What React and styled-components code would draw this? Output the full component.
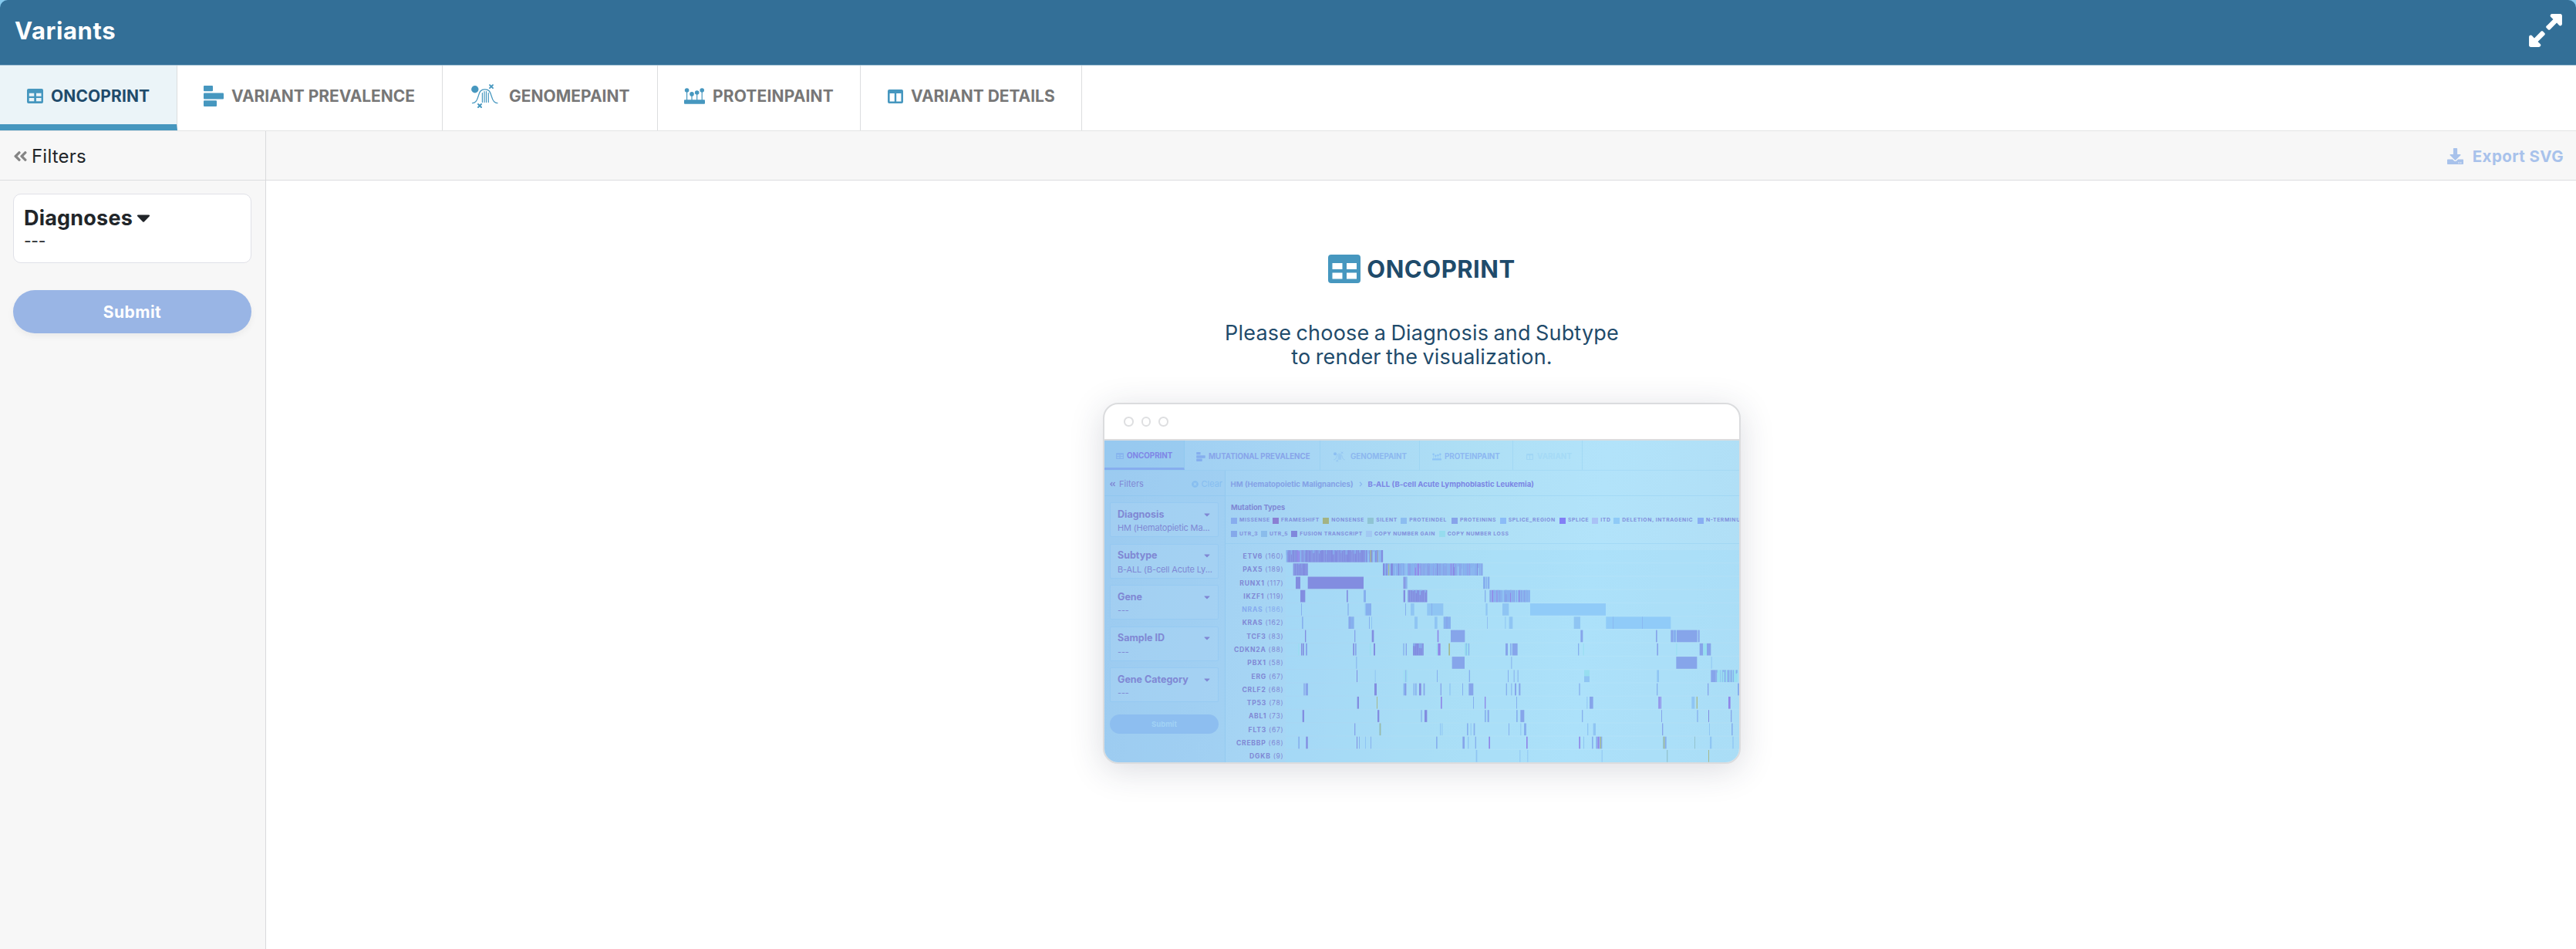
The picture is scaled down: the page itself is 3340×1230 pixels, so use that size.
import React from "react";
import styled, { createGlobalStyle } from "styled-components";
import { FaDownload, FaExpandAlt, FaAngleDoubleLeft, FaCaretDown, FaChevronRight, FaTimesCircle } from "react-icons/fa";

const GlobalStyle = createGlobalStyle`
  * { box-sizing: border-box; }
  body { margin: 0; background: #86c9ee; font-family: Inter, "Liberation Sans", sans-serif; }
  svg { display: block; flex: none; }
`;

/* ---------- icons ---------- */

const TableIcon = ({ width, height }) => (
  <svg width={width} height={height} viewBox="0 0 42 37" preserveAspectRatio="none">
    <path
      fill="currentColor"
      fillRule="evenodd"
      d="M4 0h34a4 4 0 0 1 4 4v29a4 4 0 0 1-4 4H4a4 4 0 0 1-4-4V4a4 4 0 0 1 4-4zM5.500 11v8h13v-8zM24 11v8h13v-8zM5.500 23.500v8h13v-8zM24 23.500v8h13v-8z"
    />
  </svg>
);

const BarsIcon = ({ width, height }) => (
  <svg width={width} height={height} viewBox="0 0 26 27">
    <g fill="currentColor">
      <rect width="12" height="7.300" rx="1" />
      <rect y="9.500" width="26" height="8" rx="1" />
      <rect y="19.300" width="17" height="7.700" rx="1" />
    </g>
  </svg>
);

const GenomeIcon = ({ width, height }) => (
  <svg width={width} height={height} viewBox="0 0 35 31">
    <circle cx="4.800" cy="6.800" r="4.700" fill="currentColor" />
    <g fill="none" stroke="currentColor" strokeWidth="1.300" strokeLinecap="round">
      <path d="M1.500 24.600c4 0 6-3 7.400-8.300C10.700 9.500 12.500 6.800 17.700 6.800s7 2.700 8.800 9.500c1.400 5.300 3.400 8.300 7.500 8.300" />
      <path d="M14.400 11.500v12M17 9.500v14M19.500 9.500v14M22.300 11.500v12" strokeWidth="1.200" />
      <path d="M24 1.200l4 4M28 1.200l-4 4M9 26l4 4M13 26l-4 4" strokeWidth="1.900" />
    </g>
  </svg>
);

const ProteinIcon = ({ width, height }) => (
  <svg width={width} height={height} viewBox="0 0 27 21">
    <g fill="currentColor">
      <rect y="15.300" width="27" height="5.400" rx="1" />
      <circle cx="3.600" cy="3" r="2.800" />
      <circle cx="10" cy="7.900" r="2.800" />
      <circle cx="16.700" cy="6" r="2.800" />
      <circle cx="23.200" cy="3" r="2.800" />
    </g>
    <path d="M3.600 4v12M10 8v8M16.700 6v10M23.200 4v12" stroke="currentColor" strokeWidth="1.200" />
  </svg>
);

const ColumnsIcon = ({ width, height }) => (
  <svg width={width} height={height} viewBox="0 0 20 18" preserveAspectRatio="none">
    <path
      fill="currentColor"
      fillRule="evenodd"
      d="M2 0h16a2 2 0 0 1 2 2v14a2 2 0 0 1-2 2H2a2 2 0 0 1-2-2V2a2 2 0 0 1 2-2zM2.600 5v10.500h6.200V5zM11.200 5v10.500h6.200V5z"
    />
  </svg>
);

/* ---------- page shell ---------- */

const Page = styled.div`
  width: 3340px;
  height: 1230px;
  display: flex;
  flex-direction: column;
  overflow: hidden;
`;

const Header = styled.header`
  height: 85px;
  flex: none;
  display: flex;
  align-items: center;
  justify-content: space-between;
  padding: 0 15px 5px 19px;
  border-radius: 10px 10px 0 0;
  border-bottom: 1px solid #9fbfd3;
  background: #336f97;
  color: #fff;
`;

const Title = styled.h1`
  margin: 0;
  font-size: 31px;
  font-weight: 700;
  letter-spacing: ${(p) => p.$track}px;
`;

const TabBar = styled.nav`
  height: 85px;
  flex: none;
  display: flex;
  background: #fff;
  border-bottom: 1px solid #e3e4e5;
`;

const Tab = styled.div`
  width: ${(p) => p.$width}px;
  display: flex;
  align-items: center;
  gap: ${(p) => p.$gap}px;
  padding: ${(p) => (p.$active ? 3 : 0)}px 0 ${(p) => (p.$active ? 0 : 5)}px ${(p) => p.$left}px;
  border-right: 1px solid #dcdddf;
  border-bottom: ${(p) => (p.$active ? "8px solid #4697bf" : "0")};
  background: ${(p) => (p.$active ? "#ebf4f8" : "#fff")};
  color: #4697bf;
`;

const TabText = styled.span`
  color: ${(p) => (p.$active ? "#1f4b6b" : "#777")};
  font-size: 21px;
  line-height: 26px;
  font-weight: 700;
  letter-spacing: ${(p) => p.$track}px;
  white-space: nowrap;
  padding-top: 1px;
`;

const Main = styled.div`
  flex: 1;
  display: flex;
  min-height: 0;
`;

const Sidebar = styled.aside`
  width: 345px;
  flex: none;
  background: #f7f7f7;
  border-right: 1px solid #d9dadc;
`;

const FilterHead = styled.div`
  height: 64px;
  display: flex;
  align-items: center;
  gap: 4px;
  padding: 1px 0 0 16px;
  border-bottom: 1px solid #dcdddf;
  color: #858585;
`;

const FilterText = styled.span`
  color: #212529;
  font-size: 24px;
  letter-spacing: ${(p) => p.$track}px;
`;

const SidebarBody = styled.div`
  padding: 17px 18px 0 17px;
  display: flex;
  flex-direction: column;
  gap: 35px;
`;

const Picker = styled.div`
  height: 90px;
  padding: 13px 0 0 13px;
  border: 1px solid #e0e1e8;
  border-radius: 10px;
  background: #fff;
  color: #212529;
`;

const PickerLabel = styled.div`
  display: flex;
  align-items: center;
  height: 34px;
  font-size: 27px;
  font-weight: 700;
  letter-spacing: ${(p) => p.$track}px;
`;

const PickerValue = styled.div`
  padding-top: 2px;
  font-size: 21px;
  line-height: 24px;
  letter-spacing: -0.300px;
`;

const SubmitButton = styled.div`
  height: 56px;
  border-radius: 28px;
  display: flex;
  align-items: center;
  justify-content: center;
  background: #99b5e5;
  color: #fff;
  font-size: 21px;
  font-weight: 700;
  letter-spacing: ${(p) => p.$track}px;
  box-shadow: 0 4px 8px rgba(0, 0, 0, 0.05);
`;

const Content = styled.main`
  flex: 1;
  display: flex;
  flex-direction: column;
  background: #fff;
`;

const Toolbar = styled.div`
  height: 64px;
  flex: none;
  display: flex;
  align-items: center;
  justify-content: flex-end;
  gap: 12px;
  padding: 1px 16px 0 0;
  border-bottom: 1px solid #dcdddf;
  background: #f7f7f7;
  color: #a8c2eb;
  font-size: 20.500px;
  font-weight: 700;
  letter-spacing: ${(p) => p.$track}px;
`;

const Intro = styled.section`
  display: flex;
  flex-direction: column;
  align-items: center;
  padding: 94px 0 0 2px;
`;

const IntroTitle = styled.h2`
  margin: 0;
  height: 41px;
  display: flex;
  align-items: center;
  gap: 8px;
  color: #4697bf;
`;

const IntroName = styled.span`
  color: #1f4b6b;
  font-size: 31px;
  font-weight: 700;
  letter-spacing: ${(p) => p.$track}px;
`;

const IntroText = styled.p`
  margin: 47px 0 44px;
  text-align: center;
  color: #1f4b6b;
  font-size: 27px;
  line-height: 31px;
  letter-spacing: ${(p) => p.$track}px;
  word-spacing: -1.500px;
`;

/* ---------- preview window ---------- */

const Window = styled.div`
  width: 827px;
  height: 468px;
  border: 2px solid #dbdcde;
  border-radius: 20px;
  overflow: hidden;
  background: #fff;
  box-shadow: 0 8px 44px rgba(40, 50, 80, 0.17);
`;

const WindowBar = styled.div`
  height: 47px;
  display: flex;
  align-items: center;
  gap: 10px;
  padding-left: 25px;
  border-bottom: 2px solid #dbdcde;
`;

const Dot = styled.i`
  width: 12.5px;
  height: 12.5px;
  border: 2px solid #dedfe1;
  border-radius: 50%;
`;

const Preview = styled.div`
  width: 823px;
  height: 417px;
  display: flex;
  flex-direction: column;
  overflow: hidden;
  background: linear-gradient(97deg, #9dccf1 0%, #a6d5f4 28%, #aedff5 55%, #b2e3fa 75%, #b0def5 100%);
  color: #8088d4;
  line-height: 1;
  white-space: nowrap;
`;

const MiniTabs = styled.div`
  height: 39px;
  flex: none;
  display: flex;
  border-bottom: 1px solid rgba(120, 190, 235, 0.2);
`;

const MiniTab = styled.div`
  width: ${(p) => p.$width}px;
  display: flex;
  align-items: center;
  gap: ${(p) => p.$gap}px;
  padding-left: ${(p) => p.$left}px;
  padding-top: ${(p) => (p.$active ? 5 : 3)}px;
  border-right: 1px solid rgba(120, 190, 235, 0.25);
  border-bottom: ${(p) => (p.$active ? "3px solid #86adee" : "0")};
  background: ${(p) => (p.$active ? "rgba(140,195,238,.35)" : "none")};
  color: ${(p) => p.$iconColor};
`;

const MiniTabText = styled.span`
  color: ${(p) => p.$color};
  font-size: 9.800px;
  font-weight: 700;
  letter-spacing: ${(p) => p.$track}px;
`;

const MiniMain = styled.div`
  flex: 1;
  display: flex;
`;

const MiniSide = styled.div`
  width: 157px;
  flex: none;
  border-right: 1px solid rgba(120, 190, 235, 0.3);
  background: rgba(150, 200, 240, 0.25);
`;

const MiniSideHead = styled.div`
  height: 33px;
  display: flex;
  align-items: center;
  gap: 4px;
  padding: 2px 3px 0 6px;
  border-bottom: 1px solid rgba(120, 190, 235, 0.3);
  font-size: 11px;
`;

const MiniClear = styled.span`
  display: flex;
  align-items: center;
  gap: 3px;
  margin-left: auto;
  color: #86bdf0;
`;

const MiniCards = styled.div`
  display: flex;
  flex-direction: column;
  gap: 8.500px;
  padding: 8px 8px 0 7px;
`;

const MiniCard = styled.div`
  height: 45px;
  display: flex;
  flex-direction: column;
  gap: 6px;
  padding: 8.500px 8px 0 9px;
  border: 1px solid rgba(125, 190, 240, 0.35);
  border-radius: 2px;
  background: rgba(175, 215, 245, 0.3);
`;

const MiniCardHead = styled.div`
  display: flex;
  justify-content: space-between;
  align-items: center;
  font-size: 12.500px;
  font-weight: 700;
`;

const MiniCardValue = styled.div`
  font-size: 11px;
  letter-spacing: -0.150px;
`;

const MiniSubmit = styled.div`
  height: 25.500px;
  margin-top: 7px;
  border-radius: 13px;
  display: flex;
  align-items: center;
  justify-content: center;
  background: #8dbef0;
  color: #a1d2f5;
  font-size: 9.500px;
  font-weight: 700;
`;

const MiniBody = styled.div`
  width: 666px;
  flex: none;
  overflow: hidden;
`;

const Crumbs = styled.div`
  height: 33px;
  display: flex;
  align-items: center;
  gap: 6px;
  padding: 3px 0 0 6.500px;
  border-bottom: 1px solid rgba(120, 190, 235, 0.25);
  color: #8ab6ee;
  font-size: 9.600px;
`;

const Crumb = styled.b`
  color: ${(p) => p.$color};
  letter-spacing: ${(p) => p.$track}px;
`;

const LegendPanel = styled.div`
  height: 62px;
  padding: 10px 0 0 7px;
  border-bottom: 1px solid rgba(120, 190, 235, 0.25);
`;

const LegendTitle = styled.div`
  font-size: 9.300px;
  font-weight: 700;
  letter-spacing: -0.050px;
  height: 13px;
`;

const LegendRow = styled.div`
  height: 17.300px;
  display: flex;
  align-items: center;
`;

const LegendItem = styled.div`
  width: ${(p) => p.$width}px;
  flex: none;
  display: flex;
  align-items: center;
  gap: 3px;
  color: #8290dc;
  font-size: 6.800px;
  font-weight: 700;
  letter-spacing: 0.600px;
`;

const Swatch = styled.i`
  width: 8px;
  height: 8px;
  flex: none;
  background: ${(p) => p.$color};
`;

const ChartArea = styled.div`
  display: flex;
  padding-top: 8.300px;
`;

const Genes = styled.div`
  width: 78px;
  flex: none;
  padding-right: 2.500px;
`;

const Gene = styled.div`
  height: 17.270px;
  display: flex;
  justify-content: flex-end;
  align-items: center;
  gap: 3px;
  padding-bottom: 1px;
  color: ${(p) => (p.$dim ? "#85aaee" : "#8088d4")};
  font-size: 8.600px;
  letter-spacing: 0.750px;
`;

/* ---------- data ---------- */

const TABS = [
  { label: "ONCOPRINT", width: 230, left: 35, gap: 10, Icon: TableIcon, iw: 21, ih: 19, track: 0.1, active: true },
  { label: "VARIANT PREVALENCE", width: 344, left: 34, gap: 10, Icon: BarsIcon, iw: 26, ih: 27, track: -0.05 },
  { label: "GENOMEPAINT", width: 279, left: 37, gap: 14, Icon: GenomeIcon, iw: 35, ih: 31, track: 0 },
  { label: "PROTEINPAINT", width: 263, left: 34, gap: 10, Icon: ProteinIcon, iw: 27, ih: 21, track: 0.15 },
  { label: "VARIANT DETAILS", width: 287, left: 35, gap: 10, Icon: ColumnsIcon, iw: 20, ih: 18, track: -0.05 },
];

const MINI_TABS = [
  { label: "ONCOPRINT", width: 104, left: 15, gap: 4, Icon: TableIcon, iw: 10, ih: 8, color: "#7f86e6", icon: "#87b5ee", track: 0, active: true },
  { label: "MUTATIONAL PREVALENCE", width: 176, left: 15, gap: 4, Icon: BarsIcon, iw: 12, ih: 12, color: "#88a5ea", icon: "#85aeee", track: -0.05 },
  { label: "GENOMEPAINT", width: 129, left: 17, gap: 7, Icon: GenomeIcon, iw: 15, ih: 14, color: "#8db8ef", icon: "#8cbff2", track: 0 },
  { label: "PROTEINPAINT", width: 121, left: 16, gap: 4, Icon: ProteinIcon, iw: 12, ih: 10, color: "#8db8f1", icon: "#8ec4f6", track: -0.05 },
  { label: "VARIANT", width: 90, left: 17, gap: 5, Icon: ColumnsIcon, iw: 9, ih: 8, color: "#a5daf6", icon: "#a0d6f5", track: 0.1 },
];

const CARDS = [
  ["Diagnosis", "HM (Hematopietic Ma..."],
  ["Subtype", "B-ALL (B-cell Acute Ly..."],
  ["Gene", "---"],
  ["Sample ID", "---"],
  ["Gene Category", "---"],
];

const LEGEND = [
  [
    ["MISSENSE", "#87adee", 54],
    ["FRAMESHIFT", "#8a7fd3", 65.3],
    ["NONSENSE", "#a3b383", 58],
    ["SILENT", "#8fc4d3", 43],
    ["PROTEINDEL", "#8cbdf0", 65.7],
    ["PROTEININS", "#87a3ea", 62.7],
    ["SPLICE_REGION", "#8bbcf7", 77.3],
    ["SPLICE", "#827ff5", 42.3],
    ["ITD", "#a9c2f6", 28],
    ["DELETION, INTRAGENIC", "#8fcaf7", 108.7],
    ["N-TERMINU", "#88aef3", 55],
  ],
  [
    ["UTR_3", "#85a9ea", 39],
    ["UTR_5", "#8abceb", 39.3],
    ["FUSION TRANSCRIPT", "#8088dc", 96.7],
    ["COPY NUMBER GAIN", "#a2c9f3", 94.7],
    ["COPY NUMBER LOSS", "#96dcee", 100],
  ],
];

const GENES = [
  ["ETV6", 160], ["PAX5", 189], ["RUNX1", 117], ["IKZF1", 119], ["NRAS", 186], ["KRAS", 162], ["TCF3", 83], ["CDKN2A", 88],
  ["PBX1", 58], ["ERG", 67], ["CRLF2", 68], ["TP53", 78], ["ABL1", 73], ["FLT3", 67], ["CREBBP", 68], ["DGKB", 9],
];

const INK = {
  P: "#828de0", // fusion
  Q: "#86a5ea", // fusion, lighter side of the chart
  B: "#86b0ee", // missense
  L: "#8fc5f3", // proteindel
  S: "#90cbf8", // deletion
  T: "#97def0", // copy loss
  V: "#8f86e8", // frameshift
  Y: "#a6b88c", // nonsense
  G: "#93c3cf", // silent
};

/* Stripe palettes used where a block is a run of many one-sample columns. */
const MIX = {
  1: "PPPVPBPPP",
  2: "PBLPYBPBLB",
  3: "QBPBLQQBVQB",
  4: "BQBVBQBLBQ",
  5: "TQTBTTQBT",
  6: "PPPPPPP",
};

/* Each row: start, width, ink (a letter) or stripe palette (a digit). */
const CELLS = [
  "773 84 1,857 223 6,1080 69 2",
  "800 57 6,1149 70 2,1219 318 3",
  "810 18 P,857 217 P,1229 6 P,1236 5 Q,1241 3 B,1539 9 B,1550 5 B,1557 7 B",
  "828 19 P,1008 5 P,1074 9 B,1229 7 P,1246 75 6,1545 4 B,1564 157 4",
  "831 3 B,1012 4 B,1079 4 L,1083 21 B,1236 3 B,1257 14 L,1321 63 L,1338 3 B,1549 7 L,1614 25 L,1722 294 S",
  "834 5 B,1015 22 B,1018 5 Q,1095 3 B,1104 3 L,1272 12 L,1350 11 L,1385 28 B,1396 4 Q,1555 2 B,1624 3 L,1640 14 L,1892 25 L,2017 252 S,2043 2 B,2158 2 B",
  "846 4 P,1038 4 Q,1106 8 P,1361 5 V,1413 55 Q,1918 9 Q,2211 5 Q,2269 10 Q,2280 10 B,2292 80 Q,2375 6 Q",
  "820 3 T,831 4 P,837 5 P,849 6 Q,1033 5 P,1041 5 Q,1098 4 T,1113 6 P,1228 4 B,1238 4 Q,1266 41 6,1357 4 T,1363 10 V,1404 2 T,1405 5 Y,1467 18 5,1626 9 Q,1644 5 B,1652 21 Q,1908 4 B,1928 3 T,2215 5 Q,2290 3 T,2381 14 Q,2395 14 T,2409 16 Q",
  "1045 3 B,1418 49 Q,1648 3 B,2290 81 Q,2426 3 L",
  "1047 3 P,1118 3 L,1231 3 T,1237 3 B,1241 3 T,1359 3 B,1484 4 B,1635 3 B,1658 3 B,1673 3 B,1932 21 T,2215 8 L,2425 18 Q,2443 86 5",
  "841 4 Q,848 10 Q,1116 9 P,1229 10 B,1237 3 P,1268 4 B,1275 5 B,1290 8 P,1307 5 Q,1373 4 Q,1408 4 L,1458 3 B,1483 18 Q,1628 4 B,1648 3 B,1662 6 Q,1678 6 Q,1912 4 B,2214 4 B,2412 4 Q,2529 6 B",
  "1049 7 P,1125 3 Y,1374 5 V,1500 3 B,1545 4 V,1668 3 B,1942 3 L,1953 14 Q,2221 5 V,2228 4 V,2350 12 L,2369 4 Y,2493 8 V",
  "836 7 P,1128 7 P,1297 4 B,1311 10 P,1545 5 B,1556 6 Q,1668 5 B,1684 15 Q,1923 4 B,2232 3 Q,2371 4 B,2415 3 P,2502 4 Q",
  "1038 4 Q,1135 7 G,1138 2 Y,1371 3 L,1378 3 L,1476 5 B,1490 3 L,1502 5 B,1638 3 B,1684 3 L,1698 9 B,1944 4 L,1967 10 L,2235 4 Q,2418 3 L,2505 5 B",
  "820 5 B,850 7 P,1047 3 P,1056 3 B,1080 3 L,1101 3 B,1356 5 B,1459 8 Q,1479 4 L,1508 4 B,1561 5 V,1707 5 V,1912 5 V,1929 3 L,1962 5 B,1978 5 B,1984 7 V,1991 3 B,1994 4 Y,1998 4 B,2238 5 G,2242 4 Y,2246 6 B,2361 3 G,2421 7 L,2509 4 L",
  "1511 5 L,1681 3 L,1711 3 L,2000 3 L,2253 4 G,2415 3 Y",
];

const PITCH = 51.8;

/* Small deterministic generator, so the stripes are the same on every render. */
const noise = (n) => {
  const v = Math.sin(n * 12.9898) * 43758.5453;
  return v - Math.floor(v);
};

const stripes = (x, width, palette, y) => {
  const out = [];
  let at = x;
  while (at < x + width) {
    const w = Math.min(2 + Math.floor(noise(at + y) * 5), x + width - at);
    const ink = INK[palette[Math.floor(noise(at * 3.1 + y) * palette.length)]];
    const cut = noise(at * 1.7) > 0.7 ? Math.round(noise(at * 2.3) * 20) : 0;
    out.push(<rect key={at} x={at} y={y} width={w + 0.4} height={47} fill={ink} />);
    if (cut) out.push(<rect key={`${at}c`} x={at} y={y} width={w} height={cut} fill={INK.B} />);
    at += w;
  }
  return out;
};

const Heatmap = () => (
  <svg width="588" height="276" viewBox="771 0 1764 828" preserveAspectRatio="none">
    {CELLS.map((row, i) => {
      const y = i * PITCH;
      return (
        <g key={i}>
          <rect x="771" y={y} width="1764" height="48" fill="#a0dcf8" opacity="0.35" />
          {row.split(",").map((cell) => {
            const [x, w, ink] = cell.split(" ");
            return INK[ink] ? (
              <rect key={x} x={+x} y={y} width={+w} height="47" fill={INK[ink]} />
            ) : (
              <g key={x}>{stripes(+x, +w, MIX[ink], y)}</g>
            );
          })}
        </g>
      );
    })}
    <rect x="1932" y={9 * PITCH + 24} width="21" height="23" fill={INK.L} />
  </svg>
);

const PreviewWindow = () => (
  <Window>
    <WindowBar>
      <Dot />
      <Dot />
      <Dot />
    </WindowBar>
    <Preview>
      <MiniTabs>
        {MINI_TABS.map(({ label, width, left, gap, Icon, iw, ih, color, icon, track, active }) => (
          <MiniTab key={label} $width={width} $left={left} $gap={gap} $iconColor={icon} $active={active}>
            <Icon width={iw} height={ih} />
            <MiniTabText $color={color} $track={track}>{label}</MiniTabText>
          </MiniTab>
        ))}
      </MiniTabs>
      <MiniMain>
        <MiniSide>
          <MiniSideHead>
            <FaAngleDoubleLeft size={9} />
            <span>Filters</span>
            <MiniClear>
              <FaTimesCircle size={9} />
              Clear
            </MiniClear>
          </MiniSideHead>
          <MiniCards>
            {CARDS.map(([name, value]) => (
              <MiniCard key={name}>
                <MiniCardHead>
                  {name}
                  <FaCaretDown size={12} />
                </MiniCardHead>
                <MiniCardValue>{value}</MiniCardValue>
              </MiniCard>
            ))}
            <MiniSubmit>Submit</MiniSubmit>
          </MiniCards>
        </MiniSide>
        <MiniBody>
          <Crumbs>
            <Crumb $color="#84a2e6" $track={0}>HM (Hematopoietic Malignancies)</Crumb>
            <FaChevronRight size={7} />
            <Crumb $color="#7b85e4" $track={0.04}>B-ALL (B-cell Acute Lymphoblastic Leukemia)</Crumb>
          </Crumbs>
          <LegendPanel>
            <LegendTitle>Mutation Types</LegendTitle>
            {LEGEND.map((row, i) => (
              <LegendRow key={i}>
                {row.map(([name, color, width]) => (
                  <LegendItem key={name} $width={width}>
                    <Swatch $color={color} />
                    {name}
                  </LegendItem>
                ))}
              </LegendRow>
            ))}
          </LegendPanel>
          <ChartArea>
            <Genes>
              {GENES.map(([name, count]) => (
                <Gene key={name} $dim={name === "NRAS"}>
                  <b>{name}</b>
                  <span>({count})</span>
                </Gene>
              ))}
            </Genes>
            <Heatmap />
          </ChartArea>
        </MiniBody>
      </MiniMain>
    </Preview>
  </Window>
);

export default function App() {
  return (
    <Page>
      <GlobalStyle />
      <Header>
        <Title $track={0.6}>Variants</Title>
        <FaExpandAlt size={49} />
      </Header>
      <TabBar>
        {TABS.map(({ label, width, left, gap, Icon, iw, ih, track, active }) => (
          <Tab key={label} $width={width} $left={left} $gap={gap} $active={active}>
            <Icon width={iw} height={ih} />
            <TabText $active={active} $track={track}>{label}</TabText>
          </Tab>
        ))}
      </TabBar>
      <Main>
        <Sidebar>
          <FilterHead>
            <FaAngleDoubleLeft size={21} />
            <FilterText $track={0.2}>Filters</FilterText>
          </FilterHead>
          <SidebarBody>
            <Picker>
              <PickerLabel $track={0.2}>
                Diagnoses
                <FaCaretDown size={28} />
              </PickerLabel>
              <PickerValue>---</PickerValue>
            </Picker>
            <SubmitButton $track={0.5}>Submit</SubmitButton>
          </SidebarBody>
        </Sidebar>
        <Content>
          <Toolbar $track={0.4}>
            <FaDownload size={21} />
            Export SVG
          </Toolbar>
          <Intro>
            <IntroTitle>
              <TableIcon width={42} height={37} />
              <IntroName $track={0.5}>ONCOPRINT</IntroName>
            </IntroTitle>
            <IntroText $track={0.2}>
              Please choose a Diagnosis and Subtype
              <br />
              to render the visualization.
            </IntroText>
            <PreviewWindow />
          </Intro>
        </Content>
      </Main>
    </Page>
  );
}
